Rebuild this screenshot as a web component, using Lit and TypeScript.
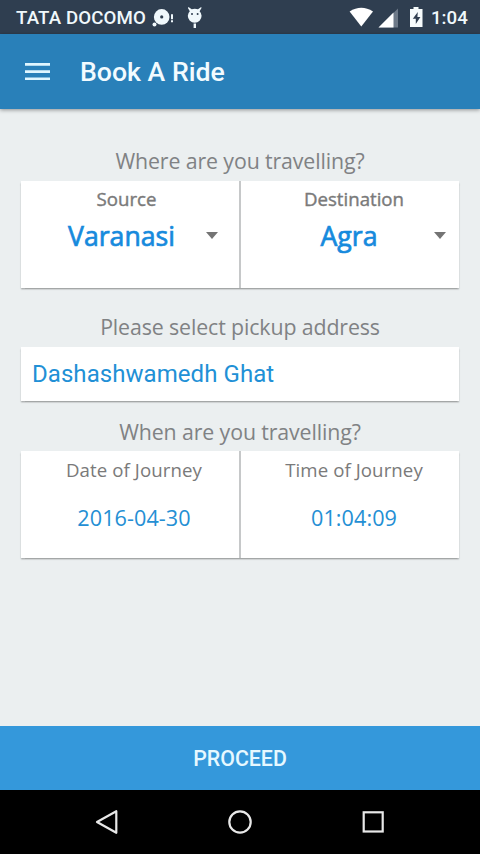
import { LitElement, html, css } from "lit";
import { customElement, property } from "lit/decorators.js";

@customElement("choice-cell")
class ChoiceCell extends LitElement {
  @property() label = "";
  @property() value = "";
  @property({ type: Boolean, reflect: true }) dropdown = false;
  @property({ type: Boolean, reflect: true }) inset = false;
  static styles = css`
    :host { display: block; flex: 1; background: #fff; text-align: center; font-family: "Open Sans", sans-serif; }
    .label { font-size: 18.67px; letter-spacing: 0.08px; line-height: 26px; padding: 6px 0 0 8px; color: #7a7a7a; }
    .row { display: flex; align-items: center; height: 44px; margin-top: 12px; color: #248fd4; font-size: 21.6px; letter-spacing: 0.07px; }
    .value { flex: 1; padding-left: 8px; }
    :host([dropdown]) .label { padding-top: 5px; letter-spacing: 0; -webkit-text-stroke: 0.4px #7a7a7a; }
    :host([dropdown]) .row { margin-top: 1px; font-size: 26.67px; letter-spacing: 0; color: #168add; -webkit-text-stroke: 0.7px #168add; }
    :host([dropdown]) .value { padding-left: 27px; padding-right: 4px; }
    .caret { border: solid transparent; border-width: 7px 6.5px 0; border-top-color: #747474; margin-right: 13px; flex: none; }
    :host([inset]) .label { padding-left: 0; padding-right: 7px; }
    :host([inset]) .value { padding-left: 20px; }
    :host([inset]) .caret { margin-right: 21px; }
  `;
  render() {
    return html`<div class="label">${this.label}</div>
      <div class="row"><span class="value">${this.value}</span>${this.dropdown ? html`<span class="caret"></span>` : ""}</div>`;
  }
}

@customElement("app-root")
class AppRoot extends LitElement {
  static styles = css`
    :host { display: flex; flex-direction: column; width: 480px; height: 854px; background: #ebeff0; font-family: Roboto, sans-serif; overflow: hidden; }
    svg { display: block; flex: none; }
    .status { height: 34px; background: #2f3e50; display: flex; align-items: center; color: #f0f8fc; font-weight: 500; font-size: 18.67px; box-sizing: border-box; padding: 1px 10px 0 16px; flex: none; }
    .carrier { width: 135px; white-space: nowrap; letter-spacing: 0.13px; }
    .debug { margin-left: 12px; }
    .clock { width: 39px; }
    .spacer { flex: 1; }
    .bar { height: 74.5px; box-sizing: border-box; background: #2980b9; display: flex; align-items: center; color: #f2fbff; font-weight: 500; font-size: 26.67px; padding: 1.5px 0 0 24px; flex: none; box-shadow: 0 1px 4px rgba(0,0,0,.4); }
    .title { margin-left: 29px; }
    .content { flex: 1; padding: 0 21px; display: flex; flex-direction: column; }
    .heading { text-align: center; color: #808284; font-family: "Open Sans", sans-serif; font-size: 21.33px; letter-spacing: -0.12px; line-height: 30px; white-space: nowrap; }
    .h1 { margin-top: 37.5px; margin-bottom: 5px; }
    .h2 { margin-top: 24px; margin-bottom: 5px; }
    .h3 { margin-top: 16px; margin-bottom: 4px; }
    .card { display: flex; gap: 2px; height: 107px; background: #c6c8c9; box-shadow: 0 1.5px 1.5px rgba(0,0,0,.3); }
    .address { height: 54px; background: #fff; box-shadow: 0 1.5px 1.5px rgba(0,0,0,.3); display: flex; align-items: center; padding-left: 11px; font-size: 24px; letter-spacing: 0.06px; color: #2190d6; }
    .proceed { height: 64px; flex: none; background: #3498db; color: #e6f8ff; font: 500 21.33px Roboto, sans-serif; border: 0; padding: 0; }
    .nav { height: 64px; background: #000; flex: none; }
  `;
  render() {
    return html`
      <div class="status">
        <span class="carrier">TATA DOCOMO</span>
        <svg width="23" height="20" viewBox="151 6 23 20"><g fill="#f0f8fc"><circle cx="161.7" cy="14.9" r="7.8"/><circle cx="154.500" cy="22.500" r="2"/><path d="M171 12.300h2v5h-2zm0 6h2v2h-2z"/></g><circle cx="161.700" cy="14.900" r="1.600" fill="#2f3e50"/></svg>
        <svg class="debug" width="18" height="24" viewBox="186 5 18 24"><g fill="#f0f8fc"><path d="M188.500 6l3.200 2.300q3-1 6.300 0l3.200-2.300.3 1-1.900 3.200q2 2 2 4.500a6.900 7 0 0 1-13.800 0q0-2.500 2-4.500l-1.900-3.200z"/><path d="M193.600 22.500h2.400v4.500h-2.400z"/></g><g fill="#2f3e50"><circle cx="192" cy="13" r="1"/><circle cx="197.600" cy="13" r="1"/></g></svg>
        <span class="spacer"></span>
        <svg width="82" height="24" viewBox="349 5 82 24"><path fill="#fff" d="M349.600 10.500q11.700-7.500 23.400 0L361.300 25.500z"/><path fill="#6d7988" d="M398 7.500V26.500H378.500z"/><path fill="#fff" d="M393.500 11.500V26.500H378.500z"/><path fill="#f6fbfc" d="M410 8h3.500V6h5v2H422.500V26H410z"/><path fill="#2f3e50" d="M417.800 11l-5 6.800h3v5.200l4.600-7h-3z"/></svg>
        <span class="clock">1:04</span>
      </div>
      <div class="bar">
        <svg width="27" height="20" viewBox="0 0 27 20"><path fill="#dff6ff" d="M1 1h25v2.700H1zm0 7.200h25v2.700H1zm0 7.200h25v2.700H1z"/></svg>
        <span class="title">Book A Ride</span>
      </div>
      <div class="content">
        <div class="heading h1">Where are you travelling?</div>
        <div class="card">
          <choice-cell dropdown inset label="Source" value="Varanasi"></choice-cell>
          <choice-cell dropdown label="Destination" value="Agra"></choice-cell>
        </div>
        <div class="heading h2">Please select pickup address</div>
        <div class="address">Dashashwamedh Ghat</div>
        <div class="heading h3">When are you travelling?</div>
        <div class="card">
          <choice-cell label="Date of Journey" value="2016-04-30"></choice-cell>
          <choice-cell label="Time of Journey" value="01:04:09"></choice-cell>
        </div>
      </div>
      <button class="proceed">PROCEED</button>
      <div class="nav">
        <svg width="480" height="64" fill="none" stroke="#e8e8e8" stroke-width="2.200"><path stroke-linejoin="round" d="M116.300 21.200v21.600L97 32z"/><circle cx="240" cy="32" r="10.700"/><rect x="363.700" y="22.300" width="19" height="19.200"/></svg>
      </div>`;
  }
}
